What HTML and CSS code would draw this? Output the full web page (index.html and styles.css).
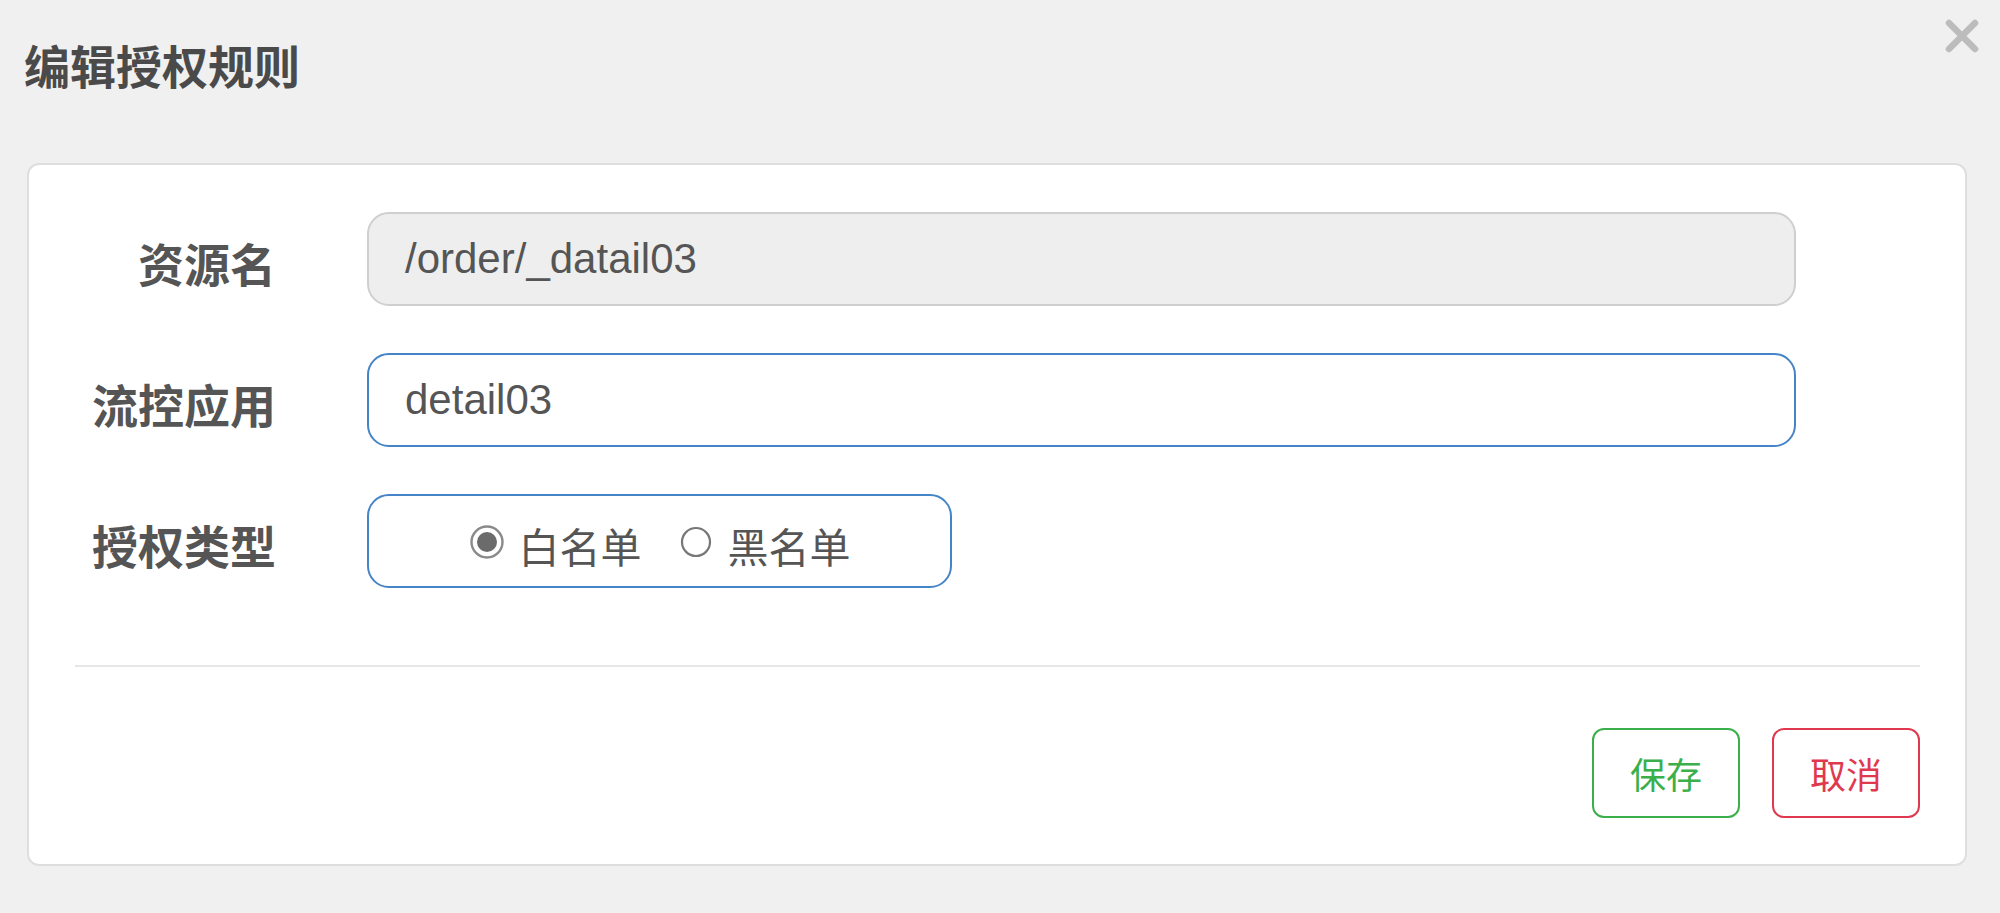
FILE: index.html
```html
<!DOCTYPE html>
<html lang="zh">
<head>
<meta charset="utf-8">
<title>编辑授权规则</title>
<link rel="stylesheet" href="styles.css">
</head>
<body>
<div class="dialog">
  <div class="dialog-header">
    <h3 class="dialog-title">编辑授权规则</h3>
    <button class="close-btn" type="button" aria-label="close">
      <svg width="36" height="36" viewBox="0 0 36 36"><path d="M5 5 L31 31 M31 5 L5 31" stroke="#bcbcbc" stroke-width="6.5" stroke-linecap="round" fill="none"/></svg>
    </button>
  </div>
  <div class="card">
    <div class="form-body">
      <div class="form-row">
        <label class="form-label">资源名</label>
        <div class="form-control disabled">/order/_datail03</div>
      </div>
      <div class="form-row">
        <label class="form-label">流控应用</label>
        <div class="form-control">detail03</div>
      </div>
      <div class="form-row">
        <label class="form-label">授权类型</label>
        <div class="radio-group">
          <span class="radio-item">
            <svg class="radio-icon" width="36" height="36" viewBox="0 0 36 36"><circle cx="18" cy="18" r="15.5" fill="#fff" stroke="#8a8a8a" stroke-width="2.4"/><circle cx="18" cy="18" r="10" fill="#6b6b6b"/></svg>
            <span class="radio-text">白名单</span>
          </span>
          <span class="radio-item">
            <svg class="radio-icon" width="36" height="36" viewBox="0 0 36 36"><circle cx="18" cy="18" r="14" fill="#fff" stroke="#777" stroke-width="2.2"/></svg>
            <span class="radio-text">黑名单</span>
          </span>
        </div>
      </div>
    </div>
    <div class="divider"></div>
    <div class="actions">
      <button class="btn btn-save" type="button">保存</button>
      <button class="btn btn-cancel" type="button">取消</button>
    </div>
  </div>
</div>
</body>
</html>
```

FILE: styles.css
```css
html, body {
  margin: 0;
  padding: 0;
  background: #f0f0f0;
  font-family: "Liberation Sans", "Noto Sans CJK SC", sans-serif;
  color: #555;
}

.dialog {
  width: 2000px;
  height: 913px;
  box-sizing: border-box;
  padding: 0 33px 0 27px;
}

.dialog-header {
  height: 163px;
  display: flex;
  justify-content: space-between;
  align-items: flex-start;
}

.dialog-title {
  margin: 41px 0 0 -3px;
  font-size: 46px;
  line-height: 46px;
  font-weight: bold;
  color: #4a4a4a;
  font-family: "Noto Sans CJK SC", sans-serif;
}

.close-btn {
  margin: 18px -13px 0 0;
  padding: 0;
  border: none;
  background: none;
  width: 36px;
  height: 36px;
  display: flex;
}

.card {
  background: #fff;
  border: 2px solid #dedede;
  border-radius: 12px;
  padding: 47px 45px 46px 46px;
}

.form-body {
  display: flex;
  flex-direction: column;
  gap: 47px;
  padding-right: 124px;
}

.form-row {
  display: flex;
  align-items: center;
  height: 94px;
}

.form-label {
  width: 201px;
  flex: none;
  text-align: right;
  font-family: "Noto Sans CJK SC", sans-serif;
  font-weight: bold;
  font-size: 46px;
  line-height: 46px;
  color: #555;
  padding-top: 6px;
  margin-right: 91px;
}

.form-control {
  flex: 1;
  height: 94px;
  box-sizing: border-box;
  border: 2px solid #4584c6;
  border-radius: 22px;
  padding: 0 36px;
  display: flex;
  align-items: center;
  font-size: 42px;
  color: #555;
  background: #fff;
}

.form-control.disabled {
  background: #eeeeee;
  border-color: #cfcfcf;
}

.radio-group {
  width: 585px;
  height: 94px;
  box-sizing: border-box;
  border: 2px solid #4584c6;
  border-radius: 22px;
  display: flex;
  align-items: center;
  justify-content: center;
  gap: 36px;
}

.radio-item {
  display: flex;
  align-items: center;
  gap: 14px;
}

.radio-icon {
  display: block;
  margin-top: 2px;
}

.radio-text {
  font-family: "Noto Sans CJK SC", sans-serif;
  font-size: 41px;
  line-height: 42px;
  color: #555;
  padding-top: 8px;
}

.divider {
  height: 2px;
  background: #e6e6e6;
  margin: 77px 0 61px;
}

.actions {
  display: flex;
  justify-content: flex-end;
  gap: 32px;
}

.btn {
  width: 148px;
  height: 90px;
  box-sizing: border-box;
  background: #fff;
  border: 2px solid;
  border-radius: 12px;
  font-family: "Noto Sans CJK SC", sans-serif;
  font-size: 36px;
  padding: 0;
}

.btn-save {
  color: #3aaf4a;
  border-color: #3aaf4a;
}

.btn-cancel {
  color: #e0384f;
  border-color: #e0384f;
}
```
